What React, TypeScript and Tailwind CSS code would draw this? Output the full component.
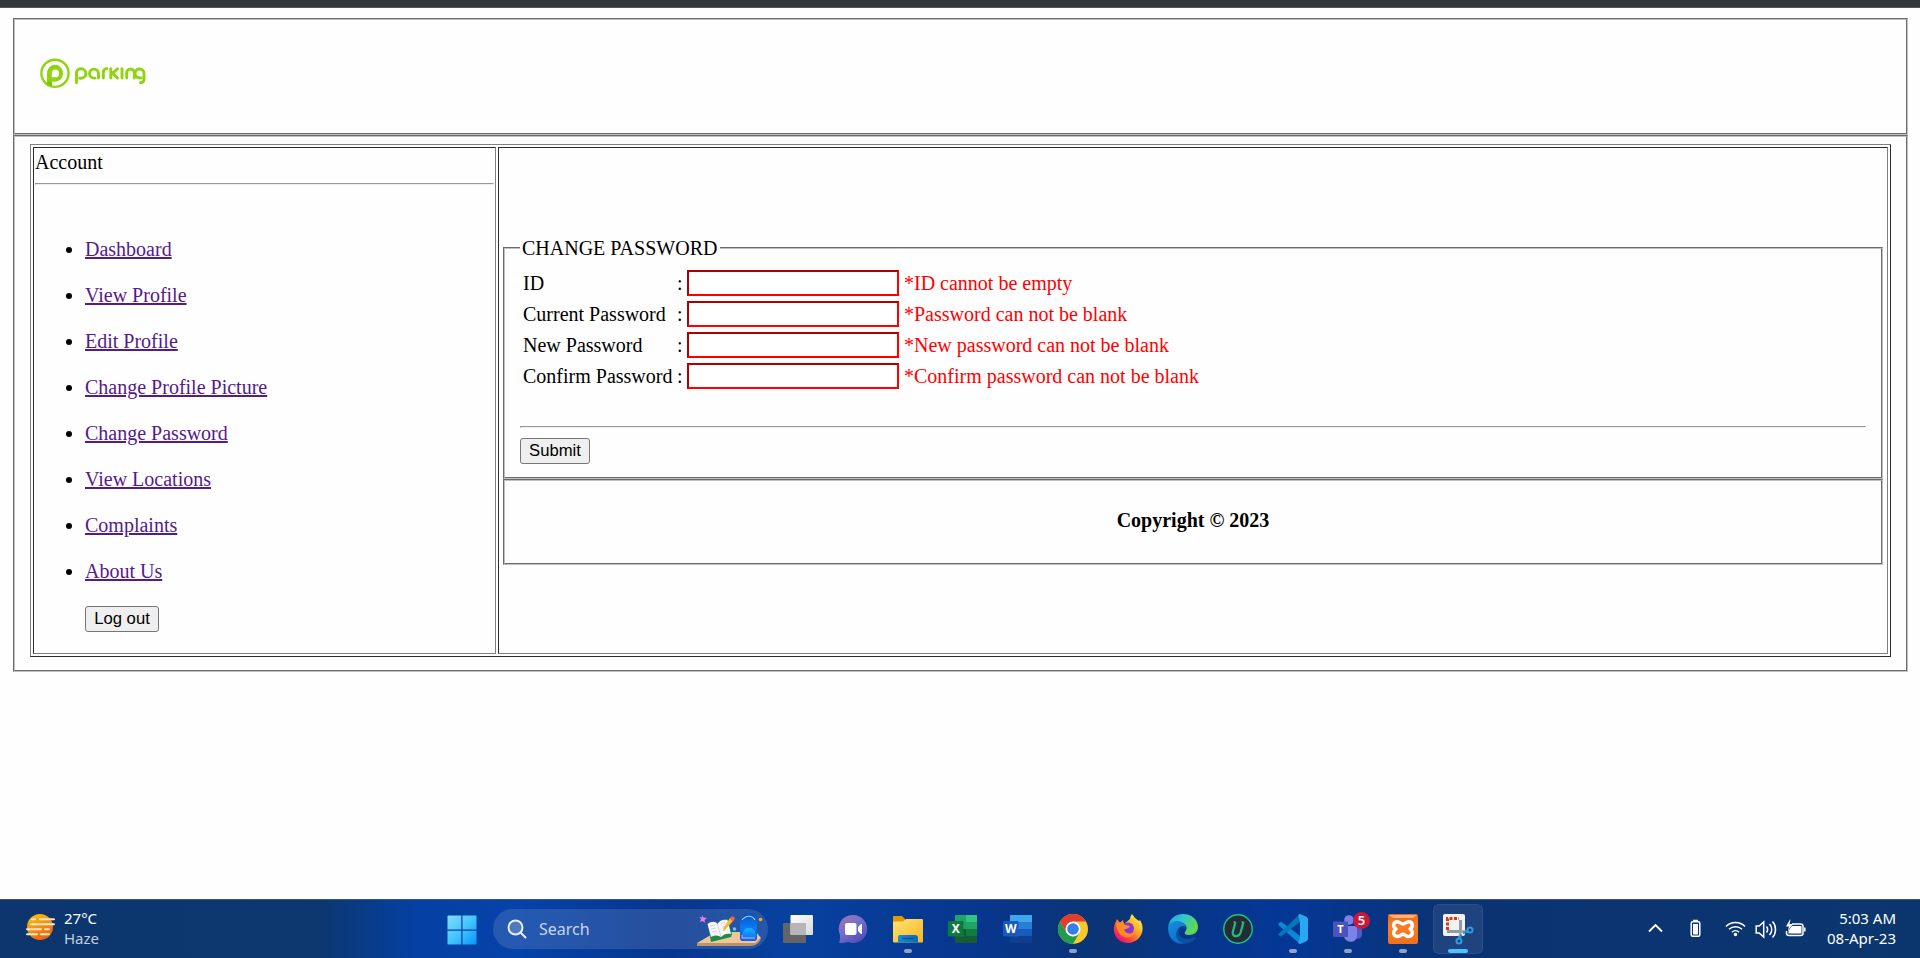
import React from "react";

const links = ["Dashboard", "View Profile", "Edit Profile", "Change Profile Picture", "Change Password", "View Locations", "Complaints", "About Us"];
const fields = [
  ["ID", "*ID cannot be empty"],
  ["Current Password", "*Password can not be blank"],
  ["New Password", "*New password can not be blank"],
  ["Confirm Password", "*Confirm password can not be blank"],
];

const groove = "border-2 [border-style:groove] border-[#c0c0c0]";
const button = "h-[26px] rounded-[3px] border border-[#767676] bg-[#efefef] font-['Liberation_Sans',sans-serif] text-[16.67px] leading-[22px] text-black";

function Logo() {
  return (
    <svg width="108" height="32" viewBox="0 0 108 32" fill="none">
      <defs><linearGradient id="stem" x2="0" y2="1"><stop offset=".4" stopColor="#8fd40c" /><stop offset="1" stopColor="#6fae08" /></linearGradient></defs>
      <circle cx="15" cy="16.300" r="13.600" stroke="#8fd40c" strokeWidth="2.400" />
      <path d="M7 26.500V16.300a8 8.500 0 1 1 8 8.500h-3.200V29Z" fill="#8fd40c" />
      <path d="M7 19h4.800v10L7 26.500Z" fill="url(#stem)" />
      <path d="M11.800 20.300v-4a3.600 3.900 0 1 1 3.600 4Z" fill="#fefefe" />
      <g transform="translate(0 0.3)" stroke="#8fd40c" strokeWidth="2.900" strokeLinecap="round" strokeLinejoin="round">
        <path d="M36.500 25.500V15.500a4 4 0 0 1 4-4h.7a4.700 4.700 0 0 1 0 9.400h-1.500" />
        <path d="M58.500 20.800V16a4.500 4.500 0 1 0-4.500 4.800h1" />
        <path d="M63.300 20.800V15a3.500 3.500 0 0 1 3.500-3.500" />
        <path d="M70.800 11.500v9.300M77.500 11.500l-5 4.500 5 4.800" />
        <path d="M82 11.500v9.300" />
        <path d="M86.700 20.800V15.500a3.800 3.800 0 0 1 7.600 0v5.300" />
        <path d="M101.500 20.600h-1a4.500 4.500 0 1 1 4-4.600v6c0 2-1.200 3.300-3.500 3.500" transform="translate(-0.5 0)" />
      </g>
    </svg>
  );
}

function Weather() {
  return (
    <svg width="31" height="28" viewBox="0 0 31 28">
      <defs><linearGradient id="sun" x2="0.5" y2="1"><stop stopColor="#ffc80a" /><stop offset="1" stopColor="#ee650f" /></linearGradient></defs>
      <circle cx="15" cy="14" r="13" fill="url(#sun)" />
      <g stroke="#f6e6cc" strokeWidth="2" strokeLinecap="round"><path d="M7 6.200h3M15 6.200h14" /><path d="M6 11.200h23" /><path d="M2 16.200h14M20 16.200h4" /><path d="M2 21.200h10M16 21.200h8" /></g>
    </svg>
  );
}

function Start() {
  return (
    <svg width="30" height="30" viewBox="0 0 30 30">
      <defs><linearGradient id="win" x2="1" y2="1"><stop stopColor="#86dcff" /><stop offset=".5" stopColor="#43c5fc" /><stop offset="1" stopColor="#0795fb" /></linearGradient></defs>
      <path fill="url(#win)" d="M1 .5h13.300v14H.5V1ZM15.500.5H29l.5.5v13.500h-14ZM.5 15.700h13.800v13.800H1l-.5-.5ZM15.500 15.700h14V29l-.5.500H15.500Z" />
    </svg>
  );
}

function SearchArt() {
  return (
    <svg className="mt-[2px] shrink-0" width="66" height="34" viewBox="0 0 66 34">
      <defs>
        <linearGradient id="pack" x2="0" y2="1"><stop stopColor="#0756c9" /><stop offset=".5" stopColor="#0a7bf4" /><stop offset="1" stopColor="#0a4fc0" /></linearGradient>
        <linearGradient id="pocket" x2="0" y2="1"><stop stopColor="#15b2ff" /><stop offset="1" stopColor="#0867e8" /></linearGradient>
      </defs>
      <path d="M0 30 19 19h40l5 6-5 5Z" fill="#edc79a" /><path d="M0 30h59l5-5-1 3c-3 4-6 5-11 5H0Z" fill="#bd9169" />
      <path d="m11 13 3 16 20-5 1-3L31 6Z" fill="#1c8c46" />
      <path d="M10.500 11c4-3 8-3 10 0 2-4 6-5 10-4l3.500 14c-4-1-7 0-10 3-3-2-6-2-10 0Z" fill="#f6f5fa" />
      <path d="m20.500 11 3.500 13M13 13l5-1M14 16l5-1M15 19l5-1M24 11l4-2M25 14l4-1" stroke="#ccc9d4" fill="none" strokeWidth=".8" />
      <path d="m33 5 3 3-8 9-2 1 .5-3Z" fill="#f8b832" /><path d="m33 5 2-2 3 2-2 4Z" fill="#ef654d" />
      <path d="m5 2 1.500 2.500L10 5 7.500 7 8 10 5.500 8 3 9l1-3-2-2 3 .5Z" fill="#ed7cf2" />
      <circle cx="37.500" cy="16" r="1.800" fill="#5dcde4" /><circle cx="63.500" cy="6.500" r="1.800" fill="#f8aa07" />
      <path d="M48 3c0-4 8-4 8 0" fill="none" stroke="#0757c0" strokeWidth="2" />
      <path d="M43 10c0-5 4-8 9-8s8 3 8 8v15c0 2-1 3-3 3H46c-2 0-3-1-3-3Z" fill="url(#pack)" />
      <path d="M45 7c4-5 10-5 13 0" stroke="#95d1fc" fill="none" strokeWidth="1.200" />
      <path d="M45 23c0-11 14-11 14 0v2c0 2-1 3-3 3h-8c-2 0-3-1-3-3Z" fill="url(#pocket)" />
      <path d="M45 22v3h13" fill="none" stroke="#bd83ff" strokeWidth="1.500" />
    </svg>
  );
}

function TaskView() {
  return <svg viewBox="0 0 30 30"><defs><linearGradient id="tv" x2="1" y2="1"><stop stopColor="#fff" /><stop offset="1" stopColor="#d8d8d8" /></linearGradient></defs><rect y="9" width="23" height="20" rx="1" fill="#646466" /><rect x="7.500" y="1" width="22.500" height="20" rx="1" fill="url(#tv)" /><path d="M7.500 9H23v12H7.500Z" fill="#b6b6b7" /></svg>;
}

function Chat() {
  return <svg viewBox="0 0 30 30"><defs><linearGradient id="chat" x2=".7" y2="1"><stop stopColor="#a477a4" /><stop offset=".5" stopColor="#7370cf" /><stop offset="1" stopColor="#534bb6" /></linearGradient></defs><path d="M15 1a14 14 0 1 1-5 27c-3 1-7 1-9 1 1-2 1-5 1-8A14 14 0 0 1 15 1Z" fill="url(#chat)" /><rect x="7" y="9" width="11.500" height="12" rx="2" fill="#fff" /><path d="m20 13 3-3h1v10h-1l-3-3Z" fill="#fff" /></svg>;
}

function Folder() {
  return <svg viewBox="0 0 30 30"><defs><linearGradient id="fold" x2="1" y2="1"><stop stopColor="#ffe374" /><stop offset="1" stopColor="#fbb51e" /></linearGradient><linearGradient id="foldBlue" x2="1"><stop stopColor="#138bdc" /><stop offset="1" stopColor="#076bb8" /></linearGradient></defs><path d="M0 3c0-1 .5-1 1-1h8l3 3v10H0Z" fill="#dc9a07" /><path d="M0 7.500h10L13 5h16c1 0 1 1 1 1v21.500c0 1-1 1-1 1H1c-1 0-1-1-1-1Z" fill="url(#fold)" /><path d="M5 28.500V24c0-3 1-3 3-3h14c2 0 3 1 3 3v4.500Z" fill="url(#foldBlue)" /><path d="M9 24.500h12" stroke="#064f89" strokeWidth="1.300" /></svg>;
}

function Excel() {
  return <svg viewBox="0 0 30 30"><path d="M7 1h22v28H7Z" fill="#21a366" /><path d="M18 1h11v7H18Z" fill="#33c481" /><path d="M7 15h11v7H7Z" fill="#145e37" /><path d="M18 15h11v7H18Z" fill="#107c41" /><path d="M7 22h22v7H7Z" fill="#185c37" /><rect y="7" width="15.500" height="15.500" rx="1.200" fill="#0f7a40" /><text x="7.700" y="18.800" textAnchor="middle" fontFamily="Noto Sans, sans-serif" fontWeight="700" fontSize="12" fill="#fff">X</text></svg>;
}

function Word() {
  return <svg viewBox="0 0 30 30"><path d="M7 1h22v7H7Z" fill="#41a5ee" /><path d="M7 8h22v7H7Z" fill="#2b7cd3" /><path d="M7 15h22v7H7Z" fill="#185abd" /><path d="M7 22h22v7H7Z" fill="#103f91" /><rect y="7" width="15.500" height="15.500" rx="1.200" fill="#185abd" /><text x="7.700" y="18.800" textAnchor="middle" fontFamily="Noto Sans, sans-serif" fontWeight="700" fontSize="12" fill="#fff">W</text></svg>;
}

function Chrome() {
  return <svg viewBox="0 0 30 30"><circle cx="15" cy="15" r="15" fill="#fbc928" /><path d="M2 7.500A15 15 0 0 1 28 7.500H15L8.500 19Z" fill="#e33b2e" /><path d="M2 7.500A15 15 0 0 0 15 30l6.500-11.200L15 22.500l-6.500-3.700Z" fill="#229b4c" /><circle cx="15" cy="15" r="7.500" fill="#fff" /><circle cx="15" cy="15" r="5.800" fill="#347fe8" /></svg>;
}

function Firefox() {
  return <svg viewBox="0 0 30 30"><defs><linearGradient id="ff" x1=".9" y1=".1" x2=".2" y2=".9"><stop stopColor="#fff14c" /><stop offset=".4" stopColor="#ffac23" /><stop offset=".7" stopColor="#ff5236" /><stop offset="1" stopColor="#e81573" /></linearGradient><radialGradient id="ffi"><stop stopColor="#7a3de8" /><stop offset="1" stopColor="#8e35c6" /></radialGradient></defs><path d="M17 5c0-2 1-4 2-5 2 3 4 5 7 7l1-1c7 11-1 23-12 23C5 29 0 21 1 14c0-4 2-6 3-9l3 4 3-3 1 4Z" fill="url(#ff)" /><circle cx="15" cy="14.500" r="6" fill="url(#ffi)" /><path d="M3 9c5-2 7 0 9 2l5 1c-1 3-4 2-6 4 2 4 7 5 11 1-2 10-18 9-19-8Z" fill="#ff8b25" /></svg>;
}

function Edge() {
  return <svg viewBox="0 0 30 30"><defs><linearGradient id="edgeA" x2="1" y2=".4"><stop stopColor="#1aa5e6" /><stop offset=".5" stopColor="#35c5cd" /><stop offset="1" stopColor="#62d84d" /></linearGradient><linearGradient id="edgeB" x2=".6" y2="1"><stop stopColor="#168fdd" /><stop offset="1" stopColor="#0870cc" /></linearGradient></defs><path d="M0 14C1 5 7 0 15 0c9 0 15 6 15 13 0 5-4 8-9 8-4 0-5-2-4-3 4-5 0-9-5-10C6 7 1 10 0 14Z" fill="url(#edgeA)" /><path d="M0 14c1-5 5-7 9-7 5 0 8 3 9 6-3-2-6-1-8 2-4 6 2 13 9 14C8 32 0 25 0 14Z" fill="url(#edgeB)" /><path d="M13 13c-5 5-1 12 6 12 4 0 7-2 8-2 1 0 1 1 0 2-3 3-6 5-12 4C8 27 5 18 13 13Z" fill="#0b50a1" /></svg>;
}

function Uninstaller() {
  return <svg viewBox="0 0 30 30"><circle cx="15" cy="15" r="14.200" fill="#252c38" stroke="#1fc77d" strokeWidth="1.400" /><path d="M12.500 8 9.800 18c-1 5 6 6 7.800.5L20.500 8" fill="none" stroke="#20bf79" strokeWidth="2.200" /><path d="M10.500 8h2M18.500 8h2" stroke="#20bf79" strokeWidth="1.500" /></svg>;
}

function Code() {
  return <svg viewBox="0 0 30 30"><path d="m0 10 3-2.500L22 22v8L1 11.500Z" fill="#078bd6" /><path d="m0 20.500 22-20.500v8L3 22.500l-2-1Z" fill="#0576b9" /><path d="m22 0 7 3 1 2v20l-1 2-7 3-2-1 2-6V8l-2-7Z" fill="#29a8f2" /></svg>;
}

function Teams() {
  return <svg viewBox="0 0 30 30"><circle cx="16" cy="6" r="4.800" fill="#7b83eb" /><circle cx="26" cy="7" r="3.500" fill="#5059c9" /><path d="M20 12h9v9c0 4-6 5-8 2Z" fill="#5059c9" /><path d="M10 12h14v10c0 7-11 8-13 1Z" fill="#7b83eb" /><rect y="7.500" width="15" height="15.500" rx="1" fill="#4b53bc" /><text x="7.400" y="19" textAnchor="middle" fontFamily="Noto Sans, sans-serif" fontWeight="700" fontSize="11" fill="#fff">T</text></svg>;
}

function Xampp() {
  return <svg viewBox="0 0 30 30"><defs><linearGradient id="xa" x2="0" y2="1"><stop stopColor="#e8691a" /><stop offset=".4" stopColor="#fb7d24" /><stop offset="1" stopColor="#f0701c" /></linearGradient></defs><rect width="30" height="30" rx="2" fill="url(#xa)" /><path d="M1 1h28l-4 3H5Z" fill="#ffb57c" /><path d="M9.500 7.800c-4.500 0-5 5-1.500 7.200-3.500 2.200-3 7.500 1.500 7.500 3 0 3-2.200 5.500-2.200s2.500 2.200 5.500 2.200c4.500 0 5-5.300 1.500-7.500 3.500-2.200 3-7.200-1.500-7.200-3 0-3 2.200-5.500 2.200s-2.500-2.200-5.500-2.200Z" fill="none" stroke="#fff" strokeWidth="3.400" strokeLinejoin="round" /></svg>;
}

function Snip() {
  return <svg viewBox="0 0 30 30" overflow="visible"><rect width="22" height="22" rx="2" fill="#f2f2f4" /><path d="M4.500 16V4.500H16" fill="none" stroke="#d83b12" strokeWidth="3" strokeDasharray="3 1.500" /><path d="M17.500 6v13M4 17.500h14" stroke="#939aa1" strokeWidth="3" /><path d="M17 17.500h7.500M17.500 17l-1 7.500" stroke="#8ea4b5" strokeWidth="2.500" /><path d="m20 19 4.500-1.500M18.500 20.500l-2 4" stroke="#1f8dcc" strokeWidth="2" /><circle cx="27" cy="16" r="2.500" fill="#12366d" stroke="#28a0e4" strokeWidth="2" /><circle cx="16" cy="27" r="2.500" fill="#12366d" stroke="#28a0e4" strokeWidth="2" /></svg>;
}

const apps = [
  { icon: <TaskView /> }, { icon: <Chat /> }, { icon: <Folder />, open: true }, { icon: <Excel /> }, { icon: <Word /> },
  { icon: <Chrome />, open: true }, { icon: <Firefox /> }, { icon: <Edge /> }, { icon: <Uninstaller /> }, { icon: <Code />, open: true },
  { icon: <Teams />, open: true, badge: "5" }, { icon: <Xampp />, open: true },
];

function Tray() {
  return (
    <svg className="mt-[16px] mr-[2px] shrink-0" width="158" height="24" viewBox="0 0 158 24" fill="none" stroke="#fff" strokeWidth="1.500">
      <path d="m1 15.500 6.500-6.500 6.500 6.500" strokeWidth="1.900" />
      <rect x="43.200" y="5.700" width="8.600" height="14.600" rx="1.500" /><path d="M45 4.500h5" /><path d="M45 8h5v10.500h-5Z" fill="#fff" stroke="none" />
      <path d="M78 10.500a13.500 13.500 0 0 1 19 0M81 13.300a9.300 9.300 0 0 1 13 0M84 16.200a5 5 0 0 1 7 0" /><circle cx="87.500" cy="18.500" r="1.700" fill="#fff" stroke="none" />
      <path d="M108.200 10h3l4.500-4v15l-4.500-4h-3Z" /><path d="M118.500 10.500c1.500 2 1.500 4 0 6M121.500 8c3 3 3 8 0 11M124.500 5.500c4 4 4 12 0 16" />
      <path d="M144 8h8.500c2 0 2.500 1 2.500 2v7.500c0 1.500-1 2-2.500 2h-11c-2 0-3-.7-3-2V15M156.800 11.500v4" /><path d="M144 10h9.500v7.500h-13v-3Z" fill="#fff" stroke="none" /><path d="m142 3.500-4 7h3l-1 4 5-6.500h-3.500l1-4.500Z" fill="#fff" stroke="none" />
    </svg>
  );
}

function Taskbar() {
  return (
    <footer className="relative flex h-[59px] w-full shrink-0 border-t border-[#3b5375] bg-[linear-gradient(90deg,#0c366d_0px,#0c376f_320px,#0541a5_420px,#0642a7_520px,#07368e_670px,#0741a0_790px,#07368d_980px,#0b3475_1110px,#06378d_1200px,#043796_1290px,#0b3373_1450px,#0b366d_1920px)] font-['Noto_Sans',sans-serif] text-[15px] text-white">
      <div className="flex w-[447px] pl-[25px] pt-[13px]">
        <Weather />
        <div className="ml-2 -mt-[5px] leading-5"><div>27°C</div><div className="text-[#c3cfdf]">Haze</div></div>
      </div>
      <div className="w-[46px] pt-[15px]"><Start /></div>
      <div className="mt-[9px] flex h-10 w-[275px] items-center overflow-hidden rounded-full bg-[#ffffff20] pl-[14px]">
        <svg className="shrink-0" width="20" height="20" viewBox="0 0 20 20" fill="none" stroke="#e9eef6" strokeWidth="2"><circle cx="8.500" cy="8.500" r="7" fill="#ffffff30" /><path d="m13.500 13.500 5 5" strokeLinecap="round" /></svg>
        <span className="ml-[12px] w-[158px] pt-px text-[16px] text-[#c5d5ee]">Search</span>
        <SearchArt />
      </div>
      <div className="ml-[15px] flex gap-[25px] pt-[14px]">
        {apps.map((app, i) => (
          <div key={i} className="relative flex w-[30px] flex-col items-center">
            <div className="size-[30px]">{app.icon}</div>
            {app.open && <span className="mt-[5px] h-1 w-2 rounded-full bg-[#91a3c3]" />}
            {app.badge && <span className="absolute -top-[2px] left-[20px] flex size-[17px] items-center justify-center rounded-full bg-[#c9183a] text-[13px] font-semibold leading-none">{app.badge}</span>}
          </div>
        ))}
      </div>
      <div className="ml-[15px] mt-[4px] flex h-[50px] w-[50px] flex-col items-center rounded-md border border-[#ffffff12] bg-[#ffffff14] pt-[9px]">
        <div className="size-[30px]"><Snip /></div><span className="mt-[5px] h-1 w-5 rounded-full bg-[#4cc2ff]" />
      </div>
      <div className="ml-auto flex pr-[24px]">
        <Tray />
        <div className="w-[88px] pt-[8px] text-right leading-5 whitespace-nowrap"><div>5:03 AM</div><div>08-Apr-23</div></div>
      </div>
    </footer>
  );
}

export default function App() {
  return (
    <div className="flex h-[958px] w-[1920px] flex-col overflow-hidden bg-[#fefefe] font-['Liberation_Serif',serif] text-[20px] leading-[23px] text-black">
      <div className="h-[8px] shrink-0 border-b border-[#55565a] bg-[#35363a]" />
      <main className="flex-1 pl-[13px] pr-[12px] pt-[10px]">
        <header className={`h-[117px] pl-[25px] pt-[37px] ${groove}`}><Logo /></header>
        <section className={`h-[537px] px-[15px] pt-[7px] ${groove}`}>
          <div className="flex h-[513px] gap-[2px] border border-b-[#2c2c2c] border-l-[#808080] border-r-[#2c2c2c] border-t-[#808080] p-[2px]">
            <nav className="w-[463px] shrink-0 border border-b-[#808080] border-l-[#2c2c2c] border-r-[#808080] border-t-[#2c2c2c] px-px pt-[3px]">
              <div>Account</div>
              <hr className="mt-[9px] h-[2px] border border-b-[#eee] border-l-[#999] border-r-[#eee] border-t-[#999]" />
              <ul className="mt-[53px] ml-[50px] flex list-disc flex-col gap-[23px]">
                {links.map((link) => <li key={link}><a href="#" className="text-[#551a8b] underline">{link}</a></li>)}
              </ul>
              <button className={`ml-[50px] mt-[23px] block w-[74px] ${button}`}>Log out</button>
            </nav>
            <div className="flex-1 border border-b-[#808080] border-l-[#2c2c2c] border-r-[#808080] border-t-[#2c2c2c] pl-[4px] pr-[4px] pt-[89px]">
              <fieldset className={`h-[242px] px-[15px] ${groove}`}>
                <legend className="h-[22px] w-[200px] whitespace-nowrap px-[2px]">CHANGE PASSWORD</legend>
                <div className="mt-[11px] grid gap-y-[5px]">
                  {fields.map(([label, error]) => (
                    <div key={label} className="grid h-[26px] grid-cols-[154px_10px_212px_auto] items-center pl-[3px]">
                      <label className="whitespace-nowrap">{label}</label><span>:</span>
                      <input className="h-[26px] w-[212px] border-2 border-b-[#f00] border-l-[#ad0000] border-r-[#f00] border-t-[#ad0000] bg-white" />
                      <span className="pl-[5px] text-[#f00]">{error}</span>
                    </div>
                  ))}
                </div>
                <hr className="mt-[37px] h-[2px] border border-b-[#eee] border-l-[#999] border-r-[#eee] border-t-[#999]" />
                <button className={`mt-[10px] block w-[70px] ${button}`}>Submit</button>
              </fieldset>
              <div className={`flex h-[86px] justify-center pt-[28px] font-bold ${groove}`}>Copyright © 2023</div>
            </div>
          </div>
        </section>
      </main>
      <Taskbar />
    </div>
  );
}
